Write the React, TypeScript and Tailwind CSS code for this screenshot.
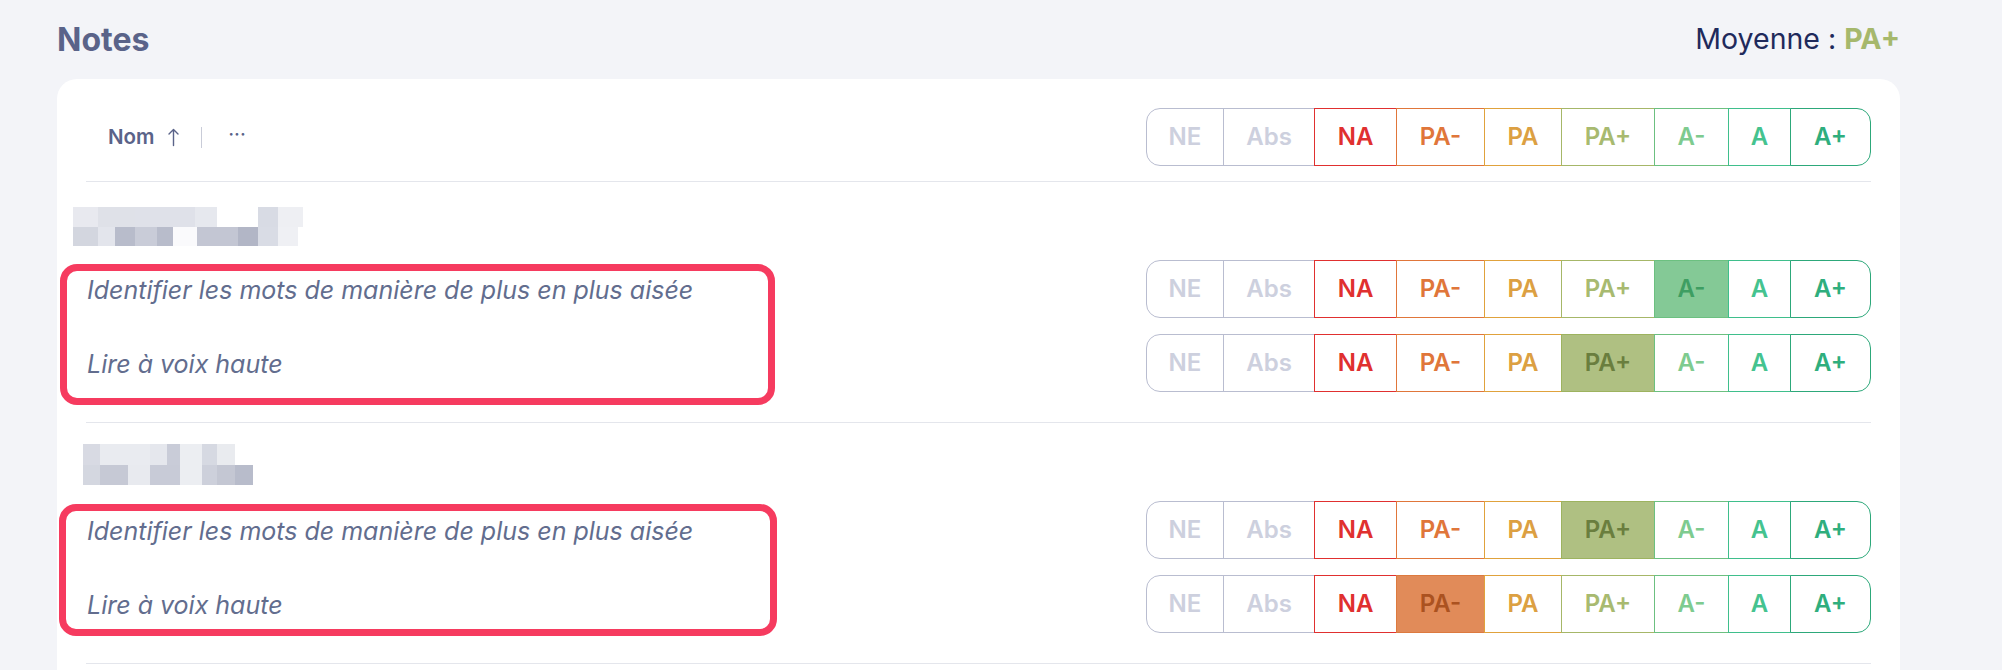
import React from "react";

type Grade = { label: string; w: string; base: string; sel: string };

const GRADES: Grade[] = [
  { label: "NE", w: "w-[78px] rounded-l-[14px]", base: "bg-white border-[#b9bdd0] text-[#cdd0de]", sel: "" },
  { label: "Abs", w: "w-[92px] -ml-px", base: "bg-white border-[#b9bdd0] text-[#cdd0de]", sel: "" },
  { label: "NA", w: "w-[83px] -ml-px", base: "bg-white border-[#e0302f] text-[#e0302f]", sel: "" },
  { label: "PA-", w: "w-[89px] -ml-px", base: "bg-white border-[#e0763a] text-[#e0763a]", sel: "border-[#dd7a3f] bg-[#e18b59] text-[#ab5220]" },
  { label: "PA", w: "w-[78px] -ml-px", base: "bg-white border-[#e0a23c] text-[#dca042]", sel: "" },
  { label: "PA+", w: "w-[94px] -ml-px", base: "bg-white border-[#a6b768] text-[#a8ba70]", sel: "border-[#9db35f] bg-[#afc082] text-[#6a7e3e]" },
  { label: "A-", w: "w-[75px] -ml-px", base: "bg-white border-[#6cc080] text-[#7ecb8f]", sel: "border-[#6cc080] bg-[#84c996] text-[#3e9e62]" },
  { label: "A", w: "w-[63px] -ml-px", base: "bg-white border-[#3fbf8c] text-[#45c38f]", sel: "" },
  { label: "A+", w: "w-[81px] -ml-px rounded-r-[14px]", base: "bg-white border-[#2da87a] text-[#2fae7d]", sel: "" },
];

function GradeBar({ selected }: { selected?: string }) {
  return (
    <div className="flex h-[58px]">
      {GRADES.map((g) => {
        const isSel = g.label === selected;
        return (
          <div
            key={g.label}
            className={`flex h-full items-center justify-center border text-[24px] font-semibold ${g.w} ${
              isSel ? g.sel : g.base
            }`}
          >
            {g.label}
          </div>
        );
      })}
    </div>
  );
}

function Row({ text, selected }: { text: string; selected?: string }) {
  return (
    <div className="flex h-[58px] items-center justify-between">
      <span className="pl-px pt-[4px] text-[25px] italic text-[#626d8e]">{text}</span>
      <GradeBar selected={selected} />
    </div>
  );
}

function Blocks({ cells, h }: { cells: string[]; h: string }) {
  return (
    <div className={`flex ${h}`}>
      {cells.map((c, i) => (
        <div key={i} className={`h-full ${c}`} />
      ))}
    </div>
  );
}

function Name1() {
  return (
    <div className="ml-[-13px] flex flex-col">
      <Blocks
        h="h-[20px]"
        cells={[
          "w-[25px] bg-[#e8e9ef]",
          "w-[37px] bg-[#dfe1e8]",
          "w-[60px] bg-[#dfe1e9]",
          "w-[22px] bg-[#e6e8ee]",
          "w-[41px] bg-white",
          "w-[20px] bg-[#d8dbe4]",
          "w-[25px] bg-[#eeeff3]",
        ]}
      />
      <Blocks
        h="h-[19px]"
        cells={[
          "w-[25px] bg-[#d3d6df]",
          "w-[17px] bg-[#e3e5ec]",
          "w-[20px] bg-[#b8bccb]",
          "w-[22px] bg-[#c9ccd8]",
          "w-[16px] bg-[#b8bccb]",
          "w-[24px] bg-[#fafafc]",
          "w-[41px] bg-[#c3c6d3]",
          "w-[20px] bg-[#b2b6c6]",
          "w-[20px] bg-[#d9dce5]",
          "w-[20px] bg-[#eff0f4]",
        ]}
      />
    </div>
  );
}

function Name2() {
  return (
    <div className="ml-[-3px] flex flex-col">
      <Blocks
        h="h-[21px]"
        cells={[
          "w-[17px] bg-[#d8dae3]",
          "w-[50px] bg-[#e9ebf0]",
          "w-[17px] bg-[#e5e7ed]",
          "w-[13px] bg-[#c9ccd8]",
          "w-[22px] bg-[#eceef2]",
          "w-[15px] bg-[#d6d9e2]",
          "w-[18px] bg-[#e9ebef]",
          "w-[18px] bg-white",
        ]}
      />
      <Blocks
        h="h-[20px]"
        cells={[
          "w-[17px] bg-[#d4d7e0]",
          "w-[28px] bg-[#c6c9d5]",
          "w-[22px] bg-[#e8eaef]",
          "w-[30px] bg-[#c8cbd7]",
          "w-[22px] bg-[#eceef2]",
          "w-[15px] bg-[#cdd0db]",
          "w-[18px] bg-[#c4c7d3]",
          "w-[18px] bg-[#b8bccb]",
        ]}
      />
    </div>
  );
}

export default function App() {
  return (
    <div className="min-h-screen bg-[#f3f4f8] font-['Inter','Noto_Sans',sans-serif]">
      <div className="ml-[57px] w-[1843px]">
        <div className="flex h-[79px] items-center justify-between">
          <h1 className="text-[32px] font-bold leading-none text-[#5a6389]">Notes</h1>
          <div className="text-[28.5px] leading-none text-[#1f2a5c]">
            Moyenne : <span className="font-bold text-[#a6b86c]">PA+</span>
          </div>
        </div>

        <div className="min-h-[700px] rounded-[20px] bg-white px-[29px] pt-[29px]">
          {/* header */}
          <div className="flex items-center justify-between border-b border-[#e4e6ec] pb-[15px]">
            <div className="flex items-center pl-[22px] text-[#5a6389]">
              <span className="text-[20.5px] font-semibold">Nom</span>
              <svg
                className="ml-[13px]"
                width="11"
                height="19"
                viewBox="0 0 11 19"
                fill="none"
                stroke="currentColor"
                strokeWidth="1.4"
                strokeLinecap="round"
                strokeLinejoin="round"
              >
                <path d="M5.5 1.5V17.5M1 6L5.5 1.5L10 6" />
              </svg>
              <div className="ml-[22px] h-[21px] w-px bg-[#c9ccd8]" />
              <span className="ml-[27px] pb-[6px] text-[16px] font-bold tracking-[0.5px]">···</span>
            </div>
            <GradeBar />
          </div>

          {/* student 1 */}
          <div className="relative border-b border-[#e4e6ec] pb-[30px]">
            <div className="h-[78px] pt-[25px]">
              <Name1 />
            </div>
            <div className="flex flex-col gap-[16px]">
              <Row text="Identifier les mots de manière de plus en plus aisée" selected="A-" />
              <Row text="Lire à voix haute" selected="PA+" />
            </div>
            <div className="pointer-events-none absolute left-[-26px] top-[82px] h-[141px] w-[715px] rounded-[17px] border-[7px] border-[#f63b5f]" />
          </div>

          {/* student 2 */}
          <div className="relative border-b border-[#e4e6ec] pb-[30px]">
            <div className="h-[78px] pt-[21px]">
              <Name2 />
            </div>
            <div className="flex flex-col gap-[16px]">
              <Row text="Identifier les mots de manière de plus en plus aisée" selected="PA+" />
              <Row text="Lire à voix haute" selected="PA-" />
            </div>
            <div className="pointer-events-none absolute left-[-27px] top-[81px] h-[132px] w-[718px] rounded-[17px] border-[7px] border-[#f63b5f]" />
          </div>
        </div>
      </div>
    </div>
  );
}
